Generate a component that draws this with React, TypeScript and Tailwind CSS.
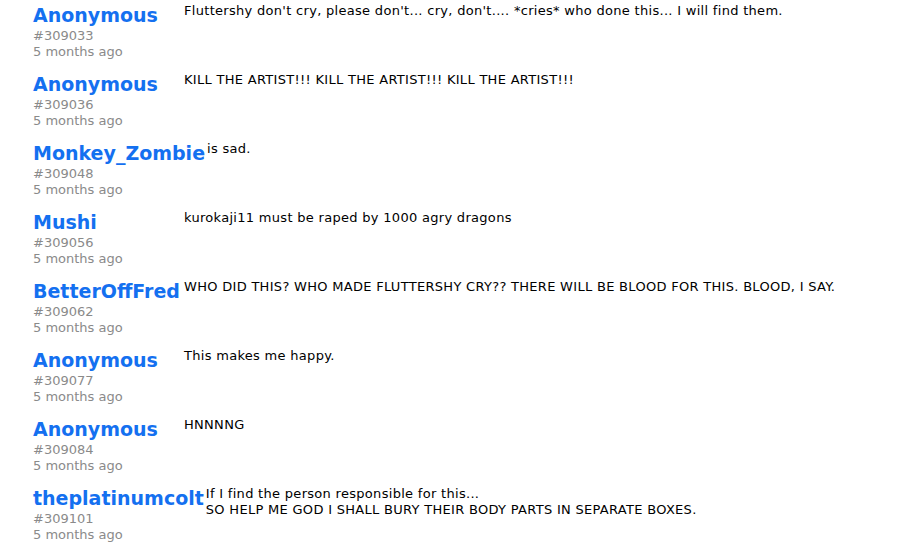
import React from "react";

const comments = [
  { id: 309033, name: "Anonymous", text: ["Fluttershy don't cry, please don't... cry, don't.... *cries* who done this... I will find them."] },
  { id: 309036, name: "Anonymous", text: ["KILL THE ARTIST!!! KILL THE ARTIST!!! KILL THE ARTIST!!!"] },
  { id: 309048, name: "Monkey_Zombie", text: ["is sad."] },
  { id: 309056, name: "Mushi", text: ["kurokaji11 must be raped by 1000 agry dragons"] },
  { id: 309062, name: "BetterOffFred", text: ["WHO DID THIS? WHO MADE FLUTTERSHY CRY?? THERE WILL BE BLOOD FOR THIS. BLOOD, I SAY."] },
  { id: 309077, name: "Anonymous", text: ["This makes me happy."] },
  { id: 309084, name: "Anonymous", text: ["HNNNNG"] },
  {
    id: 309101,
    name: "theplatinumcolt",
    text: ["If I find the person responsible for this...", "SO HELP ME GOD I SHALL BURY THEIR BODY PARTS IN SEPARATE BOXES."],
  },
];

const App = () => {
  return (
    <div className="bg-white min-h-[550px] pl-[33px] pt-[3px] font-['DejaVu_Sans',Verdana,sans-serif]">
      {comments.map((c) => (
        <div key={c.id} className="flex items-start gap-[2px] h-[69px]">
          {/* Author */}
          <div className="min-w-[149px] shrink-0">
            <div className="text-[19px] leading-[24px] font-bold text-[#1470f0]">{c.name}</div>
            <div className="mt-px text-[13px] leading-[16px] text-[#8a8a8a]">
              <div>#{c.id}</div>
              <div>5 months ago</div>
            </div>
          </div>

          {/* Message */}
          <div className="text-[13px] leading-[16px] tracking-[0.3px] text-black">
            {c.text.map((line, i) => (
              <div key={i}>{line}</div>
            ))}
          </div>
        </div>
      ))}
    </div>
  );
};

export default App;
